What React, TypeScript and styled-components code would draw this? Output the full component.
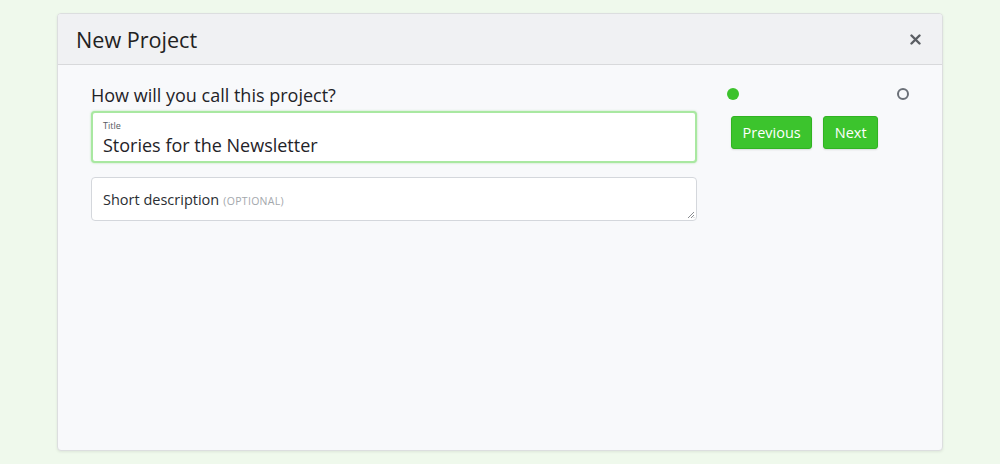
import React from 'react'
import styled, { createGlobalStyle } from 'styled-components'

const GlobalStyle = createGlobalStyle`
  * { box-sizing: border-box; }
  html, body {
    margin: 0;
    padding: 0;
    background: #eff9ec;
    font-family: 'Open Sans', 'Noto Sans', sans-serif;
    color: #1f2328;
  }
`

const Page = styled.div`
  padding-top: 13px;
  height: 464px;
`

const Modal = styled.div`
  width: 886px;
  margin: 0 auto;
  border: 1px solid #dcdedf;
  border-radius: 4px;
  background: #f8f9fb;
  box-shadow: 0 1px 3px rgba(0, 0, 0, 0.08);
  overflow: hidden;
`

const Header = styled.div`
  display: flex;
  align-items: center;
  justify-content: space-between;
  height: 51px;
  padding: 0 20px 0 18px;
  background: #f0f1f3;
  border-bottom: 1px solid #d8d9db;
`

const HeaderTitle = styled.h2`
  margin: 0;
  font-size: 21.6px;
  font-weight: 400;
  color: #222;
`

const CloseButton = styled.button`
  display: flex;
  align-items: center;
  justify-content: center;
  width: 14px;
  height: 14px;
  padding: 0;
  border: 0;
  background: none;
  cursor: pointer;
`

const Body = styled.div`
  display: flex;
  gap: 34px;
  height: 385px;
  padding: 18px 33px 0 33px;
`

const FormColumn = styled.div`
  width: 606px;
  flex-shrink: 0;
  display: flex;
  flex-direction: column;
`

const Question = styled.div`
  font-size: 18px;
  line-height: 24px;
  margin-bottom: 4px;
`

const InputBox = styled.label`
  display: block;
  height: 52px;
  padding: 7px 10px 0 10px;
  background: #fff;
  border: 2px solid #a9e8a1;
  border-radius: 4px;
  box-shadow: 0 0 2px rgba(100, 210, 90, 0.5);
`

const InputLabel = styled.span`
  display: block;
  font-size: 9px;
  line-height: 11px;
  color: #555a60;
`

const TextInput = styled.input`
  display: block;
  width: 100%;
  border: 0;
  outline: none;
  padding: 0;
  margin-top: 1px;
  font-family: inherit;
  font-size: 18px;
  line-height: 26px;
  color: #1f2328;
  background: transparent;
`

const TextAreaBox = styled.div`
  position: relative;
  height: 44px;
  margin-top: 14px;
  background: #fff;
  border: 1px solid #d4d7dc;
  border-radius: 4px;
  padding: 10px 11px 0 11px;
`

const Placeholder = styled.span`
  font-size: 14.5px;
  line-height: 20px;
  color: #2a2e33;
`

const Optional = styled.span`
  font-size: 10.5px;
  color: #a3a7ac;
  letter-spacing: 0.3px;
`

const Grip = styled.svg`
  position: absolute;
  right: 1px;
  bottom: 1px;
`

const SideColumn = styled.div`
  width: 178px;
  flex-shrink: 0;
  display: flex;
  flex-direction: column;
`

const Steps = styled.div`
  display: flex;
  justify-content: space-between;
  align-items: center;
  height: 12px;
  margin: 5px 0 0 -4px;
`

const Dot = styled.span<{ $active?: boolean }>`
  width: 12px;
  height: 12px;
  border-radius: 50%;
  background: ${(p) => (p.$active ? '#3cc22c' : 'transparent')};
  border: ${(p) => (p.$active ? 'none' : '2px solid #6b7078')};
`

const Buttons = styled.div`
  display: flex;
  gap: 11px;
  margin-top: 16px;
`

const Button = styled.button`
  height: 33px;
  padding: 0 10.5px;
  border: 1px solid #31b322;
  border-radius: 3px;
  background: #3cc42d;
  color: #fff;
  font-family: inherit;
  font-size: 14.5px;
  box-shadow: 0 1px 2px rgba(0, 0, 0, 0.12);
  cursor: pointer;
`

export default function App() {
  return (
    <>
      <GlobalStyle />
      <Page>
        <Modal>
          <Header>
            <HeaderTitle>New Project</HeaderTitle>
            <CloseButton aria-label="Close">
              <svg width="11" height="11" viewBox="0 0 11 11">
                <path
                  d="M1.5 1.5 L9.5 9.5 M9.5 1.5 L1.5 9.5"
                  stroke="#5a5e63"
                  strokeWidth="2.4"
                  strokeLinecap="round"
                />
              </svg>
            </CloseButton>
          </Header>
          <Body>
            <FormColumn>
              <Question>How will you call this project?</Question>
              <InputBox>
                <InputLabel>Title</InputLabel>
                <TextInput defaultValue="Stories for the Newsletter" />
              </InputBox>
              <TextAreaBox>
                <Placeholder>Short description</Placeholder> <Optional>(OPTIONAL)</Optional>
                <Grip width="9" height="9" viewBox="0 0 9 9">
                  <path d="M8 2 L2 8 M8 5 L5 8 M8 7.5 L7.5 8" stroke="#8a8d91" strokeWidth="1" />
                </Grip>
              </TextAreaBox>
            </FormColumn>
            <SideColumn>
              <Steps>
                <Dot $active />
                <Dot />
              </Steps>
              <Buttons>
                <Button>Previous</Button>
                <Button>Next</Button>
              </Buttons>
            </SideColumn>
          </Body>
        </Modal>
      </Page>
    </>
  )
}
